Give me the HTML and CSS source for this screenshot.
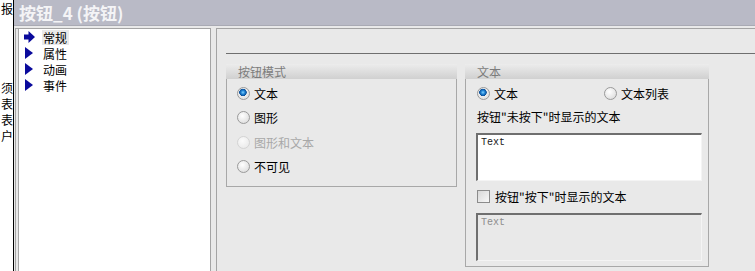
FILE: index.html
```html
<!DOCTYPE html>
<html>
<head>
<meta charset="utf-8">
<title>按钮_4 (按钮)</title>
<link rel="stylesheet" href="styles.css">
</head>
<body>
<div class="strip">
  <div class="strip-line first">报</div>
  <div class="strip-line gap">须</div>
  <div class="strip-line">表</div>
  <div class="strip-line">表</div>
  <div class="strip-line">户</div>
</div>
<div class="main">
  <div class="titlebar">按钮_4 (按钮)</div>
  <div class="content">
    <div class="tree-wrap">
      <div class="tree">
        <div class="tree-item selected">
          <svg class="arrow" width="12" height="12" viewBox="0 0 12 12"><path d="M0 3.5H4.5V0L11 6 4.5 12V8.5H0Z" fill="#0a0a9c"/></svg>
          <span class="tree-text">常规</span>
        </div>
        <div class="tree-item">
          <svg class="arrow" width="12" height="12" viewBox="0 0 12 12"><path d="M1 0L9 6 1 12Z" fill="#0a0a9c"/></svg>
          <span class="tree-text">属性</span>
        </div>
        <div class="tree-item">
          <svg class="arrow" width="12" height="12" viewBox="0 0 12 12"><path d="M1 0L9 6 1 12Z" fill="#0a0a9c"/></svg>
          <span class="tree-text">动画</span>
        </div>
        <div class="tree-item">
          <svg class="arrow" width="12" height="12" viewBox="0 0 12 12"><path d="M1 0L9 6 1 12Z" fill="#0a0a9c"/></svg>
          <span class="tree-text">事件</span>
        </div>
      </div>
    </div>
    <div class="props">
      <div class="rule"></div>
      <div class="groups">
        <div class="group mode">
          <div class="group-head">按钮模式</div>
          <div class="group-body">
            <div class="row"><span class="radio on"></span>文本</div>
            <div class="row"><span class="radio"></span>图形</div>
            <div class="row disabled"><span class="radio"></span>图形和文本</div>
            <div class="row"><span class="radio"></span>不可见</div>
          </div>
        </div>
        <div class="group text">
          <div class="group-head">文本</div>
          <div class="group-body">
            <div class="row split">
              <span class="opt"><span class="radio on"></span>文本</span>
              <span class="opt list"><span class="radio"></span>文本列表</span>
            </div>
            <div class="label">按钮"未按下"时显示的文本</div>
            <div class="textbox">Text</div>
            <div class="row check-row"><span class="check"></span>按钮"按下"时显示的文本</div>
            <div class="textbox off">Text</div>
          </div>
        </div>
      </div>
    </div>
  </div>
</div>
</body>
</html>
```

FILE: styles.css
```css
body, html {
    margin: 0;
    height: 100%;
    overflow: hidden;
}
body {
    display: flex;
    background: #ffffff;
    font-family: "Noto Sans CJK SC", "DejaVu Sans", sans-serif;
    font-size: 12px;
    color: #000;
}

/* cut-off window on the left */
.strip {
    width: 13px;
    border-right: 1px solid #000;
    background: #fff;
    overflow: hidden;
    font-size: 12px;
}
.strip-line {
    white-space: nowrap;
    height: 16px;
    line-height: 16px;
    text-align: right;
}
.strip-line.first { margin-top: 1px; }
.strip-line.gap { margin-top: 63px; }

.main {
    flex: 1;
    display: flex;
    flex-direction: column;
    background: #e9e9e9;
}
.titlebar {
    height: 25px;
    line-height: 25px;
    background: #b9bac6;
    color: #f4f4f6;
    font-weight: bold;
    font-size: 17px;
    padding-left: 5px;
    border-bottom: 1px solid #a9aab4;
    white-space: nowrap;
}
.content {
    flex: 1;
    display: flex;
    padding-top: 2px;
}

/* tree */
.tree-wrap {
    width: 193px;
    border-left: 1px solid #a4a4a4;
    border-top: 1px solid #a4a4a4;
    padding: 0 0 0 2px;
    margin-left: 1px;
    display: flex;
}
.tree {
    flex: 1;
    background: #fff;
    border-left: 1px solid #a4a4a4;
    border-right: 1px solid #a4a4a4;
}
.tree-item {
    display: flex;
    align-items: center;
    height: 16px;
    padding-left: 5px;
}
.arrow {
    flex: none;
    margin-right: 6px;
}
.tree-text {
    padding: 0 2px 0 1px;
    line-height: 15px;
}
.tree-item.selected .tree-text {
    background: #e9e9e9;
}

/* property area */
.props {
    flex: 1;
    margin-left: 5px;
    border-left: 1px solid #a4a4a4;
    border-top: 1px solid #a4a4a4;
    padding: 24px 0 0 9px;
    display: flex;
    flex-direction: column;
}
.rule {
    height: 1px;
    background: #6f6f6f;
}
.groups {
    display: flex;
    gap: 8px;
    margin-top: 10px;
    align-items: flex-start;
}
.group {
    display: flex;
    flex-direction: column;
}
.group.mode { width: 231px; }
.group.text { width: 244px; }
.group-head {
    height: 15px;
    line-height: 15px;
    padding-left: 12px;
    font-size: 12px;
    color: #7c7c7c;
    background: linear-gradient(#ececec, #d0d0d0);
}
.group-body {
    border: 1px solid #a8a8a8;
    border-top: none;
}
.mode .group-body {
    height: 105px;
    padding: 2px 0 0 9px;
}
.text .group-body {
    height: 185px;
    padding: 2px 0 0 10px;
}
.row {
    display: flex;
    align-items: center;
    height: 24.5px;
    white-space: nowrap;
}
.row.disabled { color: #a8a8a8; }
.row.disabled .radio {
    border-color: #d4d4d4;
    background: radial-gradient(circle at 40% 35%, #fbfbfb, #e6e6e6);
}
.radio {
    display: inline-block;
    box-sizing: border-box;
    width: 13px;
    height: 13px;
    border-radius: 50%;
    border: 1px solid #9a9a9a;
    background: radial-gradient(circle at 40% 35%, #ffffff, #d6d6d6);
    margin: 0 4px 0 1px;
    flex: none;
}
.radio.on {
    background:
        radial-gradient(circle at 45% 40%, #7fd0ff 0, #1d7fd0 2px, #0b4f98 3.5px, transparent 4px),
        radial-gradient(circle at 40% 35%, #ffffff, #d6d6d6);
}
.split .opt {
    display: flex;
    align-items: center;
}
.split .opt.list {
    margin-left: 85px;
}
.label {
    height: 22px;
    line-height: 22px;
    padding-left: 1px;
    margin-bottom: 5px;
}
.textbox {
    box-sizing: border-box;
    width: 226px;
    height: 48px;
    background: #fff;
    border-top: 2px solid #6f6f6f;
    border-left: 2px solid #6f6f6f;
    border-right: 1px solid #f4f4f4;
    border-bottom: 1px solid #f4f4f4;
    padding: 2px 0 0 3px;
    font-family: "Liberation Mono", "DejaVu Sans Mono", monospace;
    font-size: 10px;
    line-height: 12px;
    color: #202020;
}
.textbox.off {
    background: #e9e9e9;
    color: #8e8e8e;
}
.check-row {
    height: 32px;
}
.check {
    display: inline-block;
    box-sizing: border-box;
    width: 13px;
    height: 13px;
    border: 1px solid #8c8c8c;
    background: linear-gradient(135deg, #d8d8d8, #f8f8f8);
    margin: 0 5px 0 1px;
    flex: none;
}
```
